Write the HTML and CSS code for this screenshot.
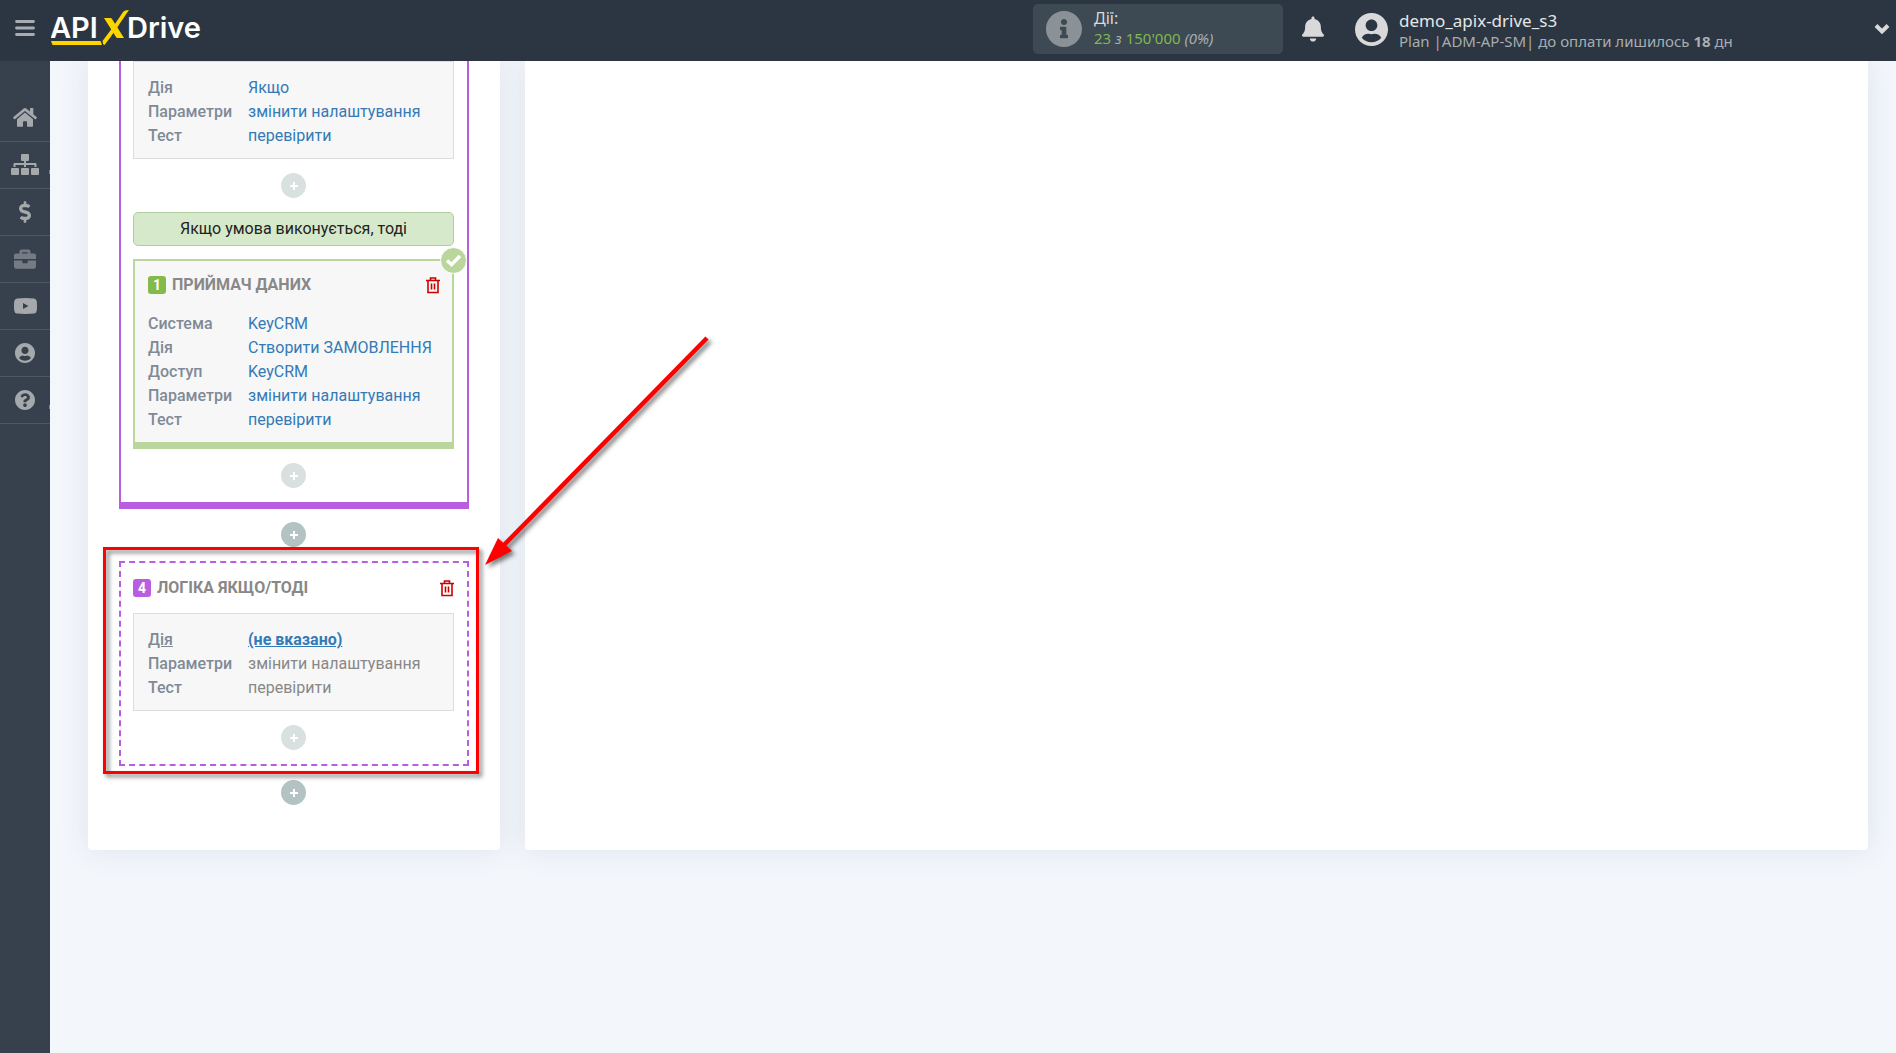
FILE: index.html
```html
<!DOCTYPE html>
<html lang="uk">
<head>
  <meta charset="UTF-8">
  <meta name="viewport" content="width=device-width, initial-scale=1.0">
  <title>ApiX-Drive</title>
  <link rel="stylesheet" href="styles.css">
</head>
<body>

  <!-- Header -->
  <header class="header">
    <button class="menu-btn" aria-label="Меню">
      <svg width="20" height="17" viewBox="0 0 20 17"><path d="M1.500 1.500h17M1.500 8h17M1.500 14.500h17" stroke="#a9adb1" stroke-width="2.800" stroke-linecap="round"/></svg>
    </button>
    <a href="#" class="logo" aria-label="ApiX-Drive">
      <svg width="156" height="40" viewBox="0 0 156 40">
        <text class="logo-text" x="-1" y="30">API</text>
        <text class="logo-text" x="76" y="30">Drive</text>
        <path d="M0 33h49.500l1.500 4H1.500z" fill="#ffd500"/>
        <path d="M51.500 33C58 25 66 13 72 4q1.500-2 6-2C71 12 61 28 53.500 37q-2-1-2-4z" fill="#ffd500"/>
        <path d="M53 10h6.500q1 0 1.500 1l12 19h-6.500q-1 0-1.500-1z" fill="#ffd500"/>
      </svg>
    </a>

    <div class="limits">
      <svg width="36" height="36" viewBox="8 8 496 496"><path fill="#8b9297" d="M256 8C119.043 8 8 119.083 8 256c0 136.997 111.043 248 248 248s248-111.003 248-248C504 119.083 392.957 8 256 8zm0 110c23.196 0 42 18.804 42 42s-18.804 42-42 42-42-18.804-42-42 18.804-42 42-42zm56 254c0 6.627-5.373 12-12 12h-88c-6.627 0-12-5.373-12-12v-24c0-6.627 5.373-12 12-12h12v-64h-12c-6.627 0-12-5.373-12-12v-24c0-6.627 5.373-12 12-12h64c6.627 0 12 5.373 12 12v100h12c6.627 0 12 5.373 12 12v24z"/></svg>
      <div class="limits-text">
        <div class="limits-title">Дії:</div>
        <div class="limits-count"><b>23</b> <i>з</i> <b>150'000</b> <i>(0%)</i></div>
      </div>
    </div>

    <button class="bell-btn" aria-label="Сповіщення">
      <svg width="22" height="26" viewBox="0 0 448 512"><path fill="#d9d9d9" d="M224 512c35.320 0 63.970-28.650 63.970-64H160.030c0 35.350 28.650 64 63.970 64zm215.390-149.710c-19.320-20.760-55.470-51.990-55.470-154.290 0-77.700-54.480-139.900-127.940-155.160V32c0-17.670-14.320-32-31.980-32s-31.980 14.330-31.980 32v20.840C118.560 68.100 64.080 130.300 64.080 208c0 102.300-36.150 133.530-55.470 154.290-6 6.450-8.660 14.160-8.610 21.710.110 16.400 12.980 32 32.100 32h383.800c19.120 0 32-15.600 32.100-32 .050-7.550-2.610-15.270-8.610-21.710z"/></svg>
    </button>

    <button class="account">
      <svg width="33" height="33" viewBox="0 8 496 496"><path fill="#d9d9d9" d="M248 8C111 8 0 119 0 256s111 248 248 248 248-111 248-248S385 8 248 8zm0 96c48.600 0 88 39.400 88 88s-39.400 88-88 88-88-39.400-88-88 39.400-88 88-88zm0 344c-58.700 0-111.300-26.600-146.500-68.200 18.800-35.400 55.600-59.800 98.500-59.800 2.400 0 4.800.4 7.100 1.100 13 4.200 26.600 6.900 40.900 6.900 14.300 0 28-2.700 40.900-6.900 2.300-.7 4.700-1.100 7.100-1.100 42.900 0 79.700 24.400 98.500 59.800C359.300 421.400 306.700 448 248 448z"/></svg>
      <span class="account-text">
        <span class="account-name">demo_apix-drive_s3</span>
        <span class="account-plan">Plan |ADM-AP-SM| до оплати лишилось <strong>18</strong> дн</span>
      </span>
      <svg class="chevron" width="16" height="12" viewBox="0 0 16 12"><path d="M2 2.500l6 6 6-6" fill="none" stroke="#d9d9d9" stroke-width="4"/></svg>
    </button>
  </header>

  <div class="layout">

    <!-- Sidebar -->
    <nav class="sidebar">
      <a href="#" aria-label="Головна"><svg width="24" height="22" viewBox="0 32 576 480"><path d="M280.370 148.260L96 300.110V464a16 16 0 0 0 16 16l112.060-.290a16 16 0 0 0 15.920-16V368a16 16 0 0 1 16-16h64a16 16 0 0 1 16 16v95.640a16 16 0 0 0 16 16.050L464 480a16 16 0 0 0 16-16V300L295.670 148.260a12.190 12.190 0 0 0-15.300 0zM571.600 251.470L488 182.560V44.050a12 12 0 0 0-12-12h-56a12 12 0 0 0-12 12v72.610L318.470 43a48 48 0 0 0-61 0L4.340 251.470a12 12 0 0 0-1.600 16.900l25.500 31A12 12 0 0 0 45.150 301l235.220-193.740a12.190 12.190 0 0 1 15.300 0L530.900 301a12 12 0 0 0 16.900-1.600l25.500-31a12 12 0 0 0-1.700-16.930z"/></svg></a>
      <a href="#" class="has-sub" aria-label="Зв'язки"><svg width="28" height="22" viewBox="0 0 28 22"><rect x="10" y="0" width="8" height="7" rx="1"/><path d="M13 6h2v3h9.500q1 0 1 1v3h-2v-2H15v2h-2v-2H4.500v2h-2v-3q0-1 1-1H13z"/><rect x="0" y="14" width="8" height="7" rx="1"/><rect x="10" y="14" width="8" height="7" rx="1"/><rect x="20" y="14" width="8" height="7" rx="1"/></svg></a>
      <a href="#" aria-label="Оплата"><svg width="12" height="22" viewBox="0 0 288 512"><path d="M209.200 233.400l-108-31.600C88.700 198.200 80 186.500 80 173.500c0-16.300 13.200-29.500 29.500-29.500h66.300c12.200 0 24.200 3.700 34.200 10.500 6.100 4.100 14.300 3.100 19.500-2l34.800-34c7.100-6.900 6.100-18.400-1.800-24.500C238 74.800 207.400 64.100 176 64V16c0-8.800-7.200-16-16-16h-32c-8.800 0-16 7.200-16 16v48h-2.500C45.800 64-5.400 118.700.5 183.600c4.200 46.100 39.400 83.600 83.800 96.600l102.500 30c12.500 3.700 21.200 15.300 21.200 28.300 0 16.300-13.200 29.500-29.500 29.500h-66.300C100 368 88 364.300 78 357.500c-6.100-4.100-14.300-3.100-19.500 2l-34.800 34c-7.100 6.900-6.100 18.400 1.800 24.500 24.500 19.200 55.100 29.900 86.500 30v48c0 8.800 7.200 16 16 16h32c8.800 0 16-7.200 16-16v-48.200c46.600-.9 90.300-28.600 105.700-72.700 21.500-61.600-14.600-124.800-72.500-141.700z"/></svg></a>
      <a href="#" class="muted" aria-label="Бізнес"><svg width="22" height="22" viewBox="0 0 512 512"><path d="M320 336c0 8.840-7.160 16-16 16h-96c-8.840 0-16-7.160-16-16v-48H0v144c0 25.600 22.400 48 48 48h416c25.600 0 48-22.400 48-48V288H320v48zm144-208h-80V80c0-25.600-22.400-48-48-48H176c-25.600 0-48 22.400-48 48v48H48c-25.600 0-48 22.400-48 48v80h512v-80c0-25.600-22.400-48-48-48zm-144 0H192V96h128v32z"/></svg></a>
      <a href="#" aria-label="Відео"><svg width="23" height="16" viewBox="0 0 23 16"><path fill-rule="evenodd" d="M3 .4Q11.500-.4 20 .4q2.500.3 2.800 3 .4 4.600 0 9.200-.3 2.700-2.800 3-8.500.8-17 0-2.500-.3-2.800-3-.4-4.600 0-9.200Q.5.7 3 .4zM9 5v6l5.500-3z"/></svg></a>
      <a href="#" aria-label="Профіль"><svg width="20" height="20" viewBox="0 8 496 496"><path d="M248 8C111 8 0 119 0 256s111 248 248 248 248-111 248-248S385 8 248 8zm0 96c48.600 0 88 39.400 88 88s-39.400 88-88 88-88-39.400-88-88 39.400-88 88-88zm0 344c-58.700 0-111.300-26.600-146.500-68.200 18.800-35.400 55.600-59.800 98.500-59.800 2.400 0 4.800.4 7.100 1.100 13 4.200 26.600 6.900 40.900 6.900 14.300 0 28-2.700 40.900-6.900 2.300-.7 4.700-1.100 7.100-1.100 42.900 0 79.700 24.400 98.500 59.800C359.300 421.400 306.700 448 248 448z"/></svg></a>
      <a href="#" class="has-sub" aria-label="Допомога"><svg width="20" height="20" viewBox="8 8 496 496"><path d="M504 256c0 136.997-111.043 248-248 248S8 392.997 8 256C8 119.083 119.043 8 256 8s248 111.083 248 248zM262.655 90c-54.497 0-89.255 22.957-116.549 63.758-3.536 5.286-2.353 12.415 2.715 16.258l34.699 26.310c5.205 3.947 12.621 3.008 16.665-2.122 17.864-22.658 30.113-35.797 57.303-35.797 20.429 0 45.698 13.148 45.698 32.958 0 14.976-12.363 22.667-32.534 33.976C247.128 238.528 216 254.941 216 296v4c0 6.627 5.373 12 12 12h56c6.627 0 12-5.373 12-12v-1.333c0-28.462 83.186-29.647 83.186-106.667 0-58.002-60.165-102-116.531-102zM256 338c-25.365 0-46 20.635-46 46 0 25.364 20.635 46 46 46s46-20.636 46-46c0-25.365-20.635-46-46-46z"/></svg></a>
    </nav>

    <main class="main">
      <section class="panel steps">

        <!-- Logic block -->
        <div class="logic logic-first">
          <dl class="box fields">
            <dt>Дія</dt><dd><a href="#">Якщо</a></dd>
            <dt>Параметри</dt><dd><a href="#">змінити налаштування</a></dd>
            <dt>Тест</dt><dd><a href="#">перевірити</a></dd>
          </dl>
          <button class="add-btn light" aria-label="Додати"></button>
          <div class="condition">Якщо умова виконується, тоді</div>

          <div class="receiver">
            <span class="done"><svg width="17" height="13" viewBox="0 0 17 13"><path d="M2 6.500l4.500 4L15 2" fill="none" stroke="#fff" stroke-width="3.500"/></svg></span>
            <div class="block-head">
              <span class="num green">1</span>
              <h2>ПРИЙМАЧ ДАНИХ</h2>
              <button class="trash" aria-label="Видалити"><svg width="14" height="17" viewBox="0 0 14 17"><path d="M0 3.500h14M4.500 3V1h5v2M2 4v11.500h10V4M5.500 6.500v6M8.500 6.500v6" fill="none" stroke="#cc0000" stroke-width="1.600"/></svg></button>
            </div>
            <dl class="fields">
              <dt>Система</dt><dd><a href="#">KeyCRM</a></dd>
              <dt>Дія</dt><dd><a href="#">Створити ЗАМОВЛЕННЯ</a></dd>
              <dt>Доступ</dt><dd><a href="#">KeyCRM</a></dd>
              <dt>Параметри</dt><dd><a href="#">змінити налаштування</a></dd>
              <dt>Тест</dt><dd><a href="#">перевірити</a></dd>
            </dl>
          </div>
          <button class="add-btn light" aria-label="Додати"></button>
        </div>

        <button class="add-btn" aria-label="Додати"></button>

        <!-- New logic block, not configured yet -->
        <div class="logic logic-new">
          <div class="block-head">
            <span class="num purple">4</span>
            <h2>ЛОГІКА ЯКЩО/ТОДІ</h2>
            <button class="trash" aria-label="Видалити"><svg width="14" height="17" viewBox="0 0 14 17"><path d="M0 3.500h14M4.500 3V1h5v2M2 4v11.500h10V4M5.500 6.500v6M8.500 6.500v6" fill="none" stroke="#cc0000" stroke-width="1.600"/></svg></button>
          </div>
          <dl class="box fields">
            <dt class="current">Дія</dt><dd><a href="#" class="current">(не вказано)</a></dd>
            <dt>Параметри</dt><dd>змінити налаштування</dd>
            <dt>Тест</dt><dd>перевірити</dd>
          </dl>
          <button class="add-btn light" aria-label="Додати"></button>

          <!-- Highlight frame and arrow -->
          <div class="frame"></div>
          <svg class="arrow" width="236" height="240" viewBox="0 0 236 240">
            <path d="M228 3L25 210" stroke="#f00" stroke-width="4.500"/>
            <path d="M6 230l13-27 14 13z" fill="#f00"/>
          </svg>
        </div>

        <button class="add-btn" aria-label="Додати"></button>
      </section>

      <section class="panel content"></section>
    </main>
  </div>

</body>
</html>
```
FILE: styles.css
```css
* {
  box-sizing: border-box;
}

body {
  margin: 0;
  min-height: 100vh;
  display: flex;
  flex-direction: column;
  background-color: #f3f7fc;
  font-family: Roboto, sans-serif;
  font-size: 16px;
  line-height: 24px;
  color: #888;
}

button {
  background: none;
  border: none;
  padding: 0;
  font: inherit;
  color: inherit;
  cursor: pointer;
}

svg {
  display: block;
  flex: none;
}

a {
  color: #337ab7;
  text-decoration: none;
}

/* Header */
.header {
  display: flex;
  align-items: center;
  height: 61px;
  padding: 0 6px 3px 15px;
  background-color: #2b3642;
  font-family: "Noto Sans", sans-serif;
  position: relative;
  z-index: 2;
}

.menu-btn {
  padding-bottom: 2px;
}

.logo {
  margin-left: 16px;
  margin-right: auto;
  padding-bottom: 2px;
}

.logo-text {
  font-family: Inter, sans-serif;
  font-size: 29px;
  font-weight: 600;
  fill: #fff;
}

.limits {
  display: flex;
  align-items: center;
  gap: 12px;
  width: 250px;
  height: 50px;
  padding: 0 13px;
  background-color: #3d4a53;
  border-radius: 5px;
}

.limits-text {
  padding-bottom: 2px;
  line-height: 20px;
}

.limits-title {
  color: #d9d9d9;
}

.limits-count {
  font-size: 15px;
  color: #a9adb1;
}

.limits-count b {
  font-weight: normal;
  color: #7fb84e;
}

.bell-btn {
  margin: 0 31px 0 19px;
}

.account {
  display: flex;
  align-items: center;
  gap: 11px;
  width: 535px;
  text-align: left;
}

.account-text {
  display: flex;
  flex-direction: column;
  padding-top: 3px;
  line-height: 20px;
}

.account-name {
  font-size: 17px;
  color: #e6e6e6;
}

.account-plan {
  font-size: 15px;
  color: #a9adb1;
}

.chevron {
  margin-left: auto;
}

.layout {
  display: flex;
  flex: 1;
}

/* Sidebar */
.sidebar {
  width: 50px;
  padding-top: 34px;
  background-color: #37414e;
}

.sidebar a {
  display: flex;
  align-items: center;
  justify-content: center;
  height: 47px;
  border-bottom: 1px solid #4d5863;
  fill: #a5a9ac;
}

.sidebar a.muted {
  fill: #747b84;
}

.sidebar .has-sub {
  background: linear-gradient(#7b838b, #7b838b) no-repeat right 28px / 1px 4px;
}

/* Panels */
.main {
  flex: 1;
  display: flex;
  align-items: stretch;
  align-self: flex-start;
  gap: 25px;
  padding: 0 28px 0 38px;
}

.panel {
  background-color: #fff;
  border-radius: 0 0 4px 4px;
  box-shadow: 0 0 30px rgba(50, 60, 85, 0.1);
}

.content {
  flex: 1;
}

.steps {
  display: flex;
  flex-direction: column;
  align-items: center;
  gap: 14px;
  width: 412px;
  padding: 0 31px 45px;
}

.steps > .add-btn {
  margin-right: 1px;
}

.logic {
  display: flex;
  flex-direction: column;
  align-items: center;
  gap: 14px;
  width: 350px;
  padding: 12px 13px 14px 12px;
  border: 2px solid #b95ee0;
}

.logic-first {
  margin-bottom: -1px;
  padding-top: 0;
  border-top: none;
  border-bottom-width: 7px;
}

.logic-new {
  position: relative;
  gap: 13px;
  padding-top: 13px;
  border-style: dashed;
}

.logic-new .box {
  margin-bottom: 1px;
}

.box {
  width: 100%;
  padding: 14px 14px 10px;
  background-color: #f7f7f7;
  border: 1px solid #ddd;
}

.fields {
  display: grid;
  grid-template-columns: 100px 1fr;
  margin: 0;
}

.fields dt {
  font-weight: 500;
  color: #808a96;
}

.fields dd {
  margin: 0;
  white-space: nowrap;
}

.fields .current {
  text-decoration: underline;
}

.fields a.current {
  font-weight: bold;
}

.condition {
  width: 100%;
  margin-bottom: -1px;
  padding: 4px;
  background-color: #d7e9cb;
  border: 1px solid #b0cf9d;
  border-radius: 5px;
  color: #222;
  text-align: center;
}

.receiver {
  position: relative;
  width: 100%;
  padding: 12px 12px 10px 13px;
  background-color: #f7f7f7;
  border: 2px solid #bbd69c;
  border-bottom-width: 7px;
}

.receiver .block-head {
  margin-bottom: 15px;
}

.done {
  position: absolute;
  top: -14px;
  right: -15px;
  display: flex;
  align-items: center;
  justify-content: center;
  width: 27px;
  height: 27px;
  background-color: #bbd69c;
  border: 1px solid #fff;
  border-radius: 50%;
}

.block-head {
  display: flex;
  align-items: center;
  gap: 6px;
  width: 100%;
}

.block-head h2 {
  margin: 0 auto 0 0;
  font-size: 16px;
  font-weight: bold;
  color: #888;
}

.num {
  width: 18px;
  height: 18px;
  border-radius: 3px;
  color: #fff;
  font-size: 14px;
  font-weight: bold;
  line-height: 18px;
  text-align: center;
}

.green {
  background-color: #84b94c;
}

.purple {
  background-color: #b95ee0;
}

/* Round plus buttons */
.add-btn {
  width: 25px;
  height: 25px;
  border-radius: 50%;
  background:
    linear-gradient(#fff, #fff) center / 8px 2px no-repeat,
    linear-gradient(#fff, #fff) center / 2px 8px no-repeat,
    #b3c3c3;
}

.add-btn.light {
  opacity: 0.5;
}

/* Annotation */
.frame {
  position: absolute;
  inset: -16px -12px -10px -18px;
  border: 3px solid #f00;
  filter: drop-shadow(3px 3px 2px rgba(0, 0, 0, 0.5));
  pointer-events: none;
}

.arrow {
  position: absolute;
  left: 358px;
  top: -228px;
  z-index: 1;
  overflow: visible;
  filter: drop-shadow(3px 3px 2px rgba(0, 0, 0, 0.5));
  pointer-events: none;
}
```
